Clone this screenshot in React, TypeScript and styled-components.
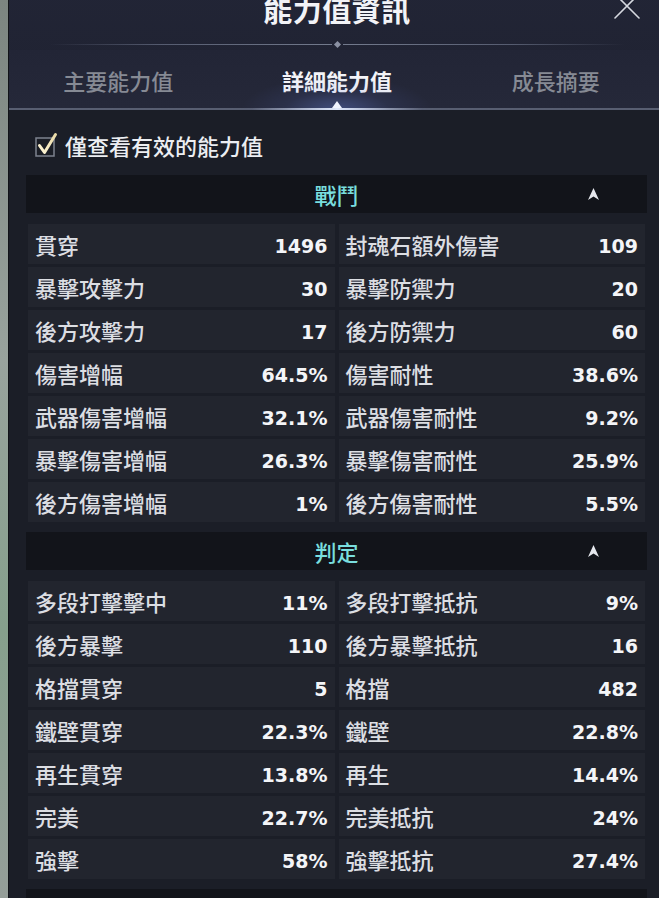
import React from 'react';
import styled, { createGlobalStyle } from 'styled-components';

const Global = createGlobalStyle`
  html, body { margin: 0; padding: 0; overflow: hidden; }
  body {
    width: 659px;
    height: 898px;
    background: linear-gradient(180deg, #7c8580 0%, #99a39d 40%, #86a08c 70%, #959e99 100%);
    font-family: "Noto Sans CJK TC", "Noto Sans", sans-serif;
  }
`;

const Panel = styled.div`
  margin-left: 8px;
  margin-top: -20px;
  width: 657px;
  height: 940px;
  background: #1b1e27;
  border-left: 1px solid #111318;
  box-sizing: border-box;
`;

const Top = styled.div`
  background: linear-gradient(180deg, #222536 0%, #1f2231 100%);
`;

const TitleBar = styled.div`
  height: 58px;
  display: grid;
  grid-template-columns: 1fr auto 1fr;
  align-items: center;
  padding: 0 24px;
`;

const Title = styled.div`
  grid-column: 2;
  font-size: 29px;
  font-weight: 700;
  color: #f2f3f7;
  letter-spacing: 0.5px;
`;

const Close = styled.div`
  grid-column: 3;
  justify-self: end;
  display: flex;
  margin-top: -6px;
`;

const Divider = styled.div`
  height: 12px;
  display: flex;
  align-items: center;
  padding: 0 40px;
`;

const DivLine = styled.div<{ $dir: 'l' | 'r' }>`
  flex: 1;
  height: 1px;
  background: linear-gradient(
    ${p => (p.$dir === 'l' ? '90deg' : '270deg')},
    rgba(150, 160, 185, 0) 0%,
    rgba(150, 160, 185, 0.45) 40%,
    rgba(170, 180, 200, 0.6) 100%
  );
`;

const Diamond = styled.div`
  width: 5px;
  height: 5px;
  transform: rotate(45deg);
  background: #8a90a2;
  margin: 0 3px;
`;

const Tabs = styled.div`
  height: 58px;
  display: grid;
  grid-template-columns: repeat(3, 1fr);
  border-bottom: 2px solid rgba(165, 175, 195, 0.42);
  background: linear-gradient(180deg, #222536 0%, #252839 100%);
`;

const Tab = styled.div<{ $active?: boolean }>`
  position: relative;
  display: flex;
  align-items: center;
  justify-content: center;
  font-size: 22px;
  font-weight: ${p => (p.$active ? 700 : 500)};
  color: ${p => (p.$active ? '#f3f4f8' : '#868a94')};
  padding-top: 2px;

  ${p =>
    p.$active &&
    `
    &::before {
      content: '';
      position: absolute;
      left: 50%;
      bottom: -2px;
      width: 190px;
      height: 34px;
      transform: translateX(-50%);
      background: radial-gradient(ellipse 50% 100% at 50% 100%, rgba(120, 150, 255, 0.35) 0%, rgba(90, 110, 200, 0.12) 55%, rgba(0,0,0,0) 100%);
      pointer-events: none;
    }
    &::after {
      content: '';
      position: absolute;
      left: 50%;
      bottom: -2px;
      width: 170px;
      height: 2px;
      transform: translateX(-50%);
      background: linear-gradient(90deg, rgba(220,230,255,0) 0%, rgba(230,238,255,0.95) 50%, rgba(220,230,255,0) 100%);
    }
  `}
`;

const Pointer = styled.span`
  position: absolute;
  left: 50%;
  bottom: 0;
  transform: translateX(-50%);
  width: 0;
  height: 0;
  border-left: 5px solid transparent;
  border-right: 5px solid transparent;
  border-bottom: 7px solid #f0f4ff;
`;

const Content = styled.div`
  padding: 15px 18px 0 17px;
`;

const CheckRow = styled.div`
  height: 40px;
  display: flex;
  align-items: center;
  gap: 5px;
  padding-left: 8px;
  font-size: 22px;
  font-weight: 500;
  color: #eceef2;
  margin-bottom: 10px;
`;

const Section = styled.div`
  margin-bottom: 10px;
`;

const SectionHead = styled.div`
  height: 38px;
  display: grid;
  grid-template-columns: 1fr auto 1fr;
  align-items: center;
  background: #12141a;
  padding: 0 48px;
  margin-bottom: 11px;
`;

const SectionTitle = styled.div`
  grid-column: 2;
  font-size: 22px;
  font-weight: 500;
  color: #79dede;
`;

const Arrow = styled.div`
  grid-column: 3;
  justify-self: end;
  display: flex;
`;

const Grid = styled.div`
  display: grid;
  grid-template-columns: 1fr 1fr;
  column-gap: 4px;
  row-gap: 3px;
  padding: 0 2px;
`;

const Cell = styled.div`
  height: 40px;
  display: flex;
  align-items: center;
  justify-content: space-between;
  padding: 0 7px 0 7px;
  background: #22252e;
`;

const Label = styled.span`
  font-size: 22px;
  font-weight: 500;
  color: #dcdee3;
`;

const Value = styled.span`
  font-family: "DejaVu Sans", "Noto Sans", sans-serif;
  font-size: 19px;
  font-weight: 700;
  color: #f4f5f8;
  padding-top: 3px;
`;

type Row = [string, string, string, string];

const combat: Row[] = [
  ['貫穿', '1496', '封魂石額外傷害', '109'],
  ['暴擊攻擊力', '30', '暴擊防禦力', '20'],
  ['後方攻擊力', '17', '後方防禦力', '60'],
  ['傷害增幅', '64.5%', '傷害耐性', '38.6%'],
  ['武器傷害增幅', '32.1%', '武器傷害耐性', '9.2%'],
  ['暴擊傷害增幅', '26.3%', '暴擊傷害耐性', '25.9%'],
  ['後方傷害增幅', '1%', '後方傷害耐性', '5.5%'],
];

const judge: Row[] = [
  ['多段打擊擊中', '11%', '多段打擊抵抗', '9%'],
  ['後方暴擊', '110', '後方暴擊抵抗', '16'],
  ['格擋貫穿', '5', '格擋', '482'],
  ['鐵壁貫穿', '22.3%', '鐵壁', '22.8%'],
  ['再生貫穿', '13.8%', '再生', '14.4%'],
  ['完美', '22.7%', '完美抵抗', '24%'],
  ['強擊', '58%', '強擊抵抗', '27.4%'],
];

const ArrowIcon = () => (
  <svg width="11" height="12" viewBox="0 0 11 12">
    <path d="M5.5 0 L11 12 L5.5 8.6 L0 12 Z" fill="#e6e8ee" />
  </svg>
);

const CloseIcon = () => (
  <svg width="28" height="28" viewBox="0 0 28 28">
    <path d="M2 2 L26 26 M26 2 L2 26" stroke="#d6d9e0" strokeWidth="1.6" strokeLinecap="round" />
  </svg>
);

const CheckIcon = () => (
  <svg width="26" height="26" viewBox="0 0 26 26">
    <defs>
      <linearGradient id="chk" x1="0" y1="1" x2="1" y2="0">
        <stop offset="0" stopColor="#fff6d6" />
        <stop offset="1" stopColor="#e9d9a6" />
      </linearGradient>
    </defs>
    <rect x="2" y="6" width="18" height="18" fill="#1a1d25" stroke="#7d828e" strokeWidth="1.5" />
    <path d="M5.5 13.5 L10.5 20.5 L21.5 2.5" fill="none" stroke="url(#chk)" strokeWidth="3" strokeLinejoin="round" strokeLinecap="round" />
  </svg>
);

const StatSection = ({ title, rows }: { title: string; rows: Row[] }) => (
  <Section>
    <SectionHead>
      <SectionTitle>{title}</SectionTitle>
      <Arrow>
        <ArrowIcon />
      </Arrow>
    </SectionHead>
    <Grid>
      {rows.map((r, i) => (
        <React.Fragment key={i}>
          <Cell>
            <Label>{r[0]}</Label>
            <Value>{r[1]}</Value>
          </Cell>
          <Cell>
            <Label>{r[2]}</Label>
            <Value>{r[3]}</Value>
          </Cell>
        </React.Fragment>
      ))}
    </Grid>
  </Section>
);

export default function App() {
  return (
    <>
      <Global />
      <Panel>
        <Top>
          <TitleBar>
            <Title>能力值資訊</Title>
            <Close>
              <CloseIcon />
            </Close>
          </TitleBar>
          <Divider>
            <DivLine $dir="l" />
            <Diamond />
            <DivLine $dir="r" />
          </Divider>
          <Tabs>
            <Tab>主要能力值</Tab>
            <Tab $active>
              詳細能力值
              <Pointer />
            </Tab>
            <Tab>成長摘要</Tab>
          </Tabs>
        </Top>
        <Content>
          <CheckRow>
            <CheckIcon />
            僅查看有效的能力值
          </CheckRow>
          <StatSection title="戰鬥" rows={combat} />
          <StatSection title="判定" rows={judge} />
          <StatSection title="" rows={[]} />
        </Content>
      </Panel>
    </>
  );
}
